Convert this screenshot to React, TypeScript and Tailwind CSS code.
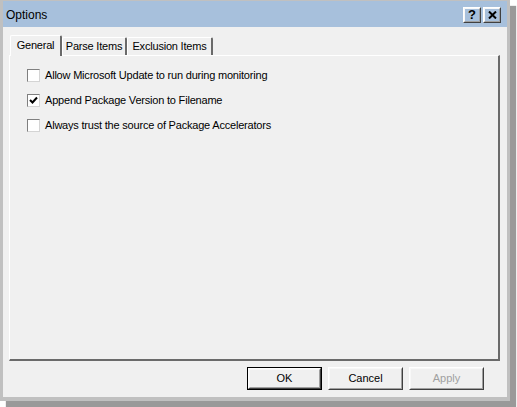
const font = { fontFamily: '"Liberation Sans", Arial, sans-serif' };

// classic raised 3D edge used by buttons
function Raised3D({ children, className = '' }: { children: React.ReactNode; className?: string }) {
  return (
    <div className={`border border-t-white border-l-white border-r-[#404040] border-b-[#404040] ${className}`}>
      <div className="flex h-full w-full items-center justify-center border border-t-[#f8f8f8] border-l-[#f8f8f8] border-r-[#a0a0a0] border-b-[#a0a0a0]">
        {children}
      </div>
    </div>
  );
}

function CheckRow({ label, checked }: { label: string; checked?: boolean }) {
  return (
    <div className="flex h-[13px] items-center">
      <div className="flex h-[13px] w-[13px] items-center justify-center border border-t-[#7f7f7f] border-l-[#7f7f7f] border-r-[#d4d4d4] border-b-[#d4d4d4] bg-white">
        {checked && (
          <svg width="9" height="9" viewBox="0 0 9 9">
            <path d="M1 4 L3.5 6.5 L8 1.5" fill="none" stroke="black" strokeWidth="2" />
          </svg>
        )}
      </div>
      <span className="ml-[5px] text-[11px] leading-none tracking-[-0.2px] text-black">{label}</span>
    </div>
  );
}

function Tab({ label, selected, width }: { label: string; selected?: boolean; width: string }) {
  return (
    <div
      className={`flex items-center justify-center rounded-t-[2px] border-l border-t border-r-2 border-l-white border-t-white border-r-[#6a6a6a] bg-[#f0f0f0] text-[11px] tracking-[-0.2px] text-black ${width} ${
        selected ? 'relative z-10 -mb-[1px] h-[21px] pb-[2px]' : 'h-[18px]'
      }`}
    >
      {label}
    </div>
  );
}

export default function App() {
  return (
    <div className="h-[407px] w-[517px] bg-white" style={font}>
      <div className="flex h-[401px] w-[510px] flex-col border-x-[3px] border-t border-b-[4px] border-[#c0c0c0] bg-[#f0f0f0] shadow-[6px_6px_1px_rgba(0,0,0,0.4)]">
        {/* title bar */}
        <div className="flex h-[26px] items-center justify-between bg-[#a7c0dc] pl-[3px] pr-[6px]">
          <span className="pt-[2px] text-[12px] text-black">Options</span>
          <div className="flex gap-[2px] pt-[1px]">
            <Raised3D className="h-[16px] w-[18px]">
              <span className="text-[13px] font-bold leading-none text-black">?</span>
            </Raised3D>
            <Raised3D className="h-[16px] w-[18px]">
              <svg width="9" height="8" viewBox="0 0 9 8">
                <path d="M1 0.5 L8 7.5 M8 0.5 L1 7.5" stroke="black" strokeWidth="2" />
              </svg>
            </Raised3D>
          </div>
        </div>

        {/* body */}
        <div className="flex flex-1 flex-col pl-[6px] pr-[7px] pt-[8px]">
          <div className="flex h-[20px] items-end pl-[1px]">
            <Tab label="General" selected width="w-[52px]" />
            <Tab label="Parse Items" width="w-[65px]" />
            <Tab label="Exclusion Items" width="w-[86px]" />
          </div>
          <div className="h-[306px] border-l border-t border-r-2 border-b-2 border-l-white border-t-white border-r-[#6a6a6a] border-b-[#6a6a6a]">
            <div className="flex flex-col gap-[12px] pl-[17px] pt-[13px]">
              <CheckRow label="Allow Microsoft Update to run during monitoring" />
              <CheckRow label="Append Package Version to Filename" checked />
              <CheckRow label="Always trust the source of Package Accelerators" />
            </div>
          </div>

          <div className="flex justify-end gap-[6px] pr-[16px] pt-[6px]">
            <div className="border border-black">
              <Raised3D className="h-[21px] w-[73px]">
                <span className="text-[11px] text-black">OK</span>
              </Raised3D>
            </div>
            <Raised3D className="h-[23px] w-[75px]">
              <span className="text-[11px] text-black">Cancel</span>
            </Raised3D>
            <Raised3D className="h-[23px] w-[75px]">
              <span className="text-[11px] text-[#a0a0a0]">Apply</span>
            </Raised3D>
          </div>
        </div>
      </div>
    </div>
  );
}
